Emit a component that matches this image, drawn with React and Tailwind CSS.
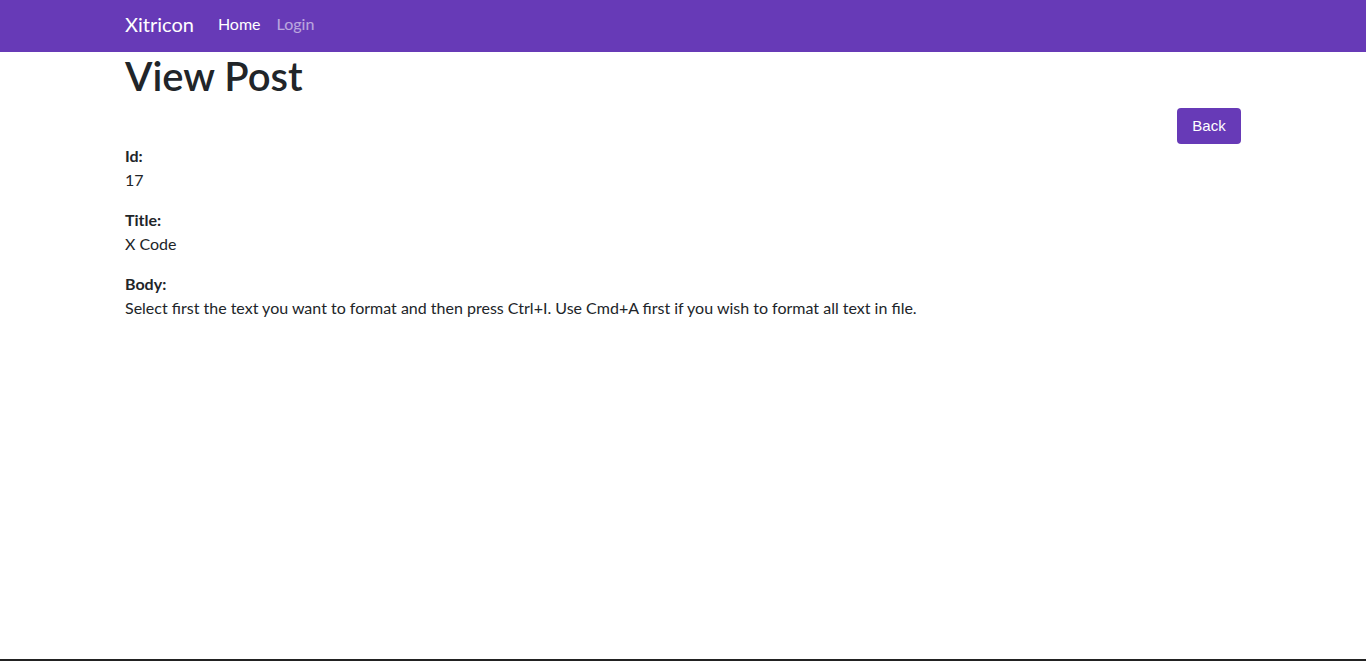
import React from 'react';

const Field = ({ label, value }) => (
  <div className="mb-4">
    <div className="font-bold leading-6">{label}</div>
    <div className="leading-6">{value}</div>
  </div>
);

export default function App() {
  return (
    <div className="min-h-[661px] flex flex-col bg-white text-[#212529] font-['Lato',sans-serif]">
      <nav className="h-[52px] bg-[#673ab7] flex items-center pb-1">
        <div className="w-[1116px] mx-auto flex items-center">
          <a className="text-xl text-white mr-6">Xitricon</a>
          <a className="text-base text-white mr-4">Home</a>
          <a className="text-base text-white/55">Login</a>
        </div>
      </nav>

      <main className="flex-1 w-[1116px] mx-auto">
        <h1 className="text-[40px] leading-[48px] font-semibold mb-2">View Post</h1>
        <div className="flex justify-end">
          <button className="h-9 w-16 rounded bg-[#673ab7] text-white text-[15px] font-['Liberation_Sans',Arial,sans-serif]">
            Back
          </button>
        </div>
        <Field label="Id:" value="17" />
        <Field label="Title:" value="X Code" />
        <Field
          label="Body:"
          value="Select first the text you want to format and then press Ctrl+I. Use Cmd+A first if you wish to format all text in file."
        />
      </main>

      <footer className="h-[2px] bg-[#222]" />
    </div>
  );
}
